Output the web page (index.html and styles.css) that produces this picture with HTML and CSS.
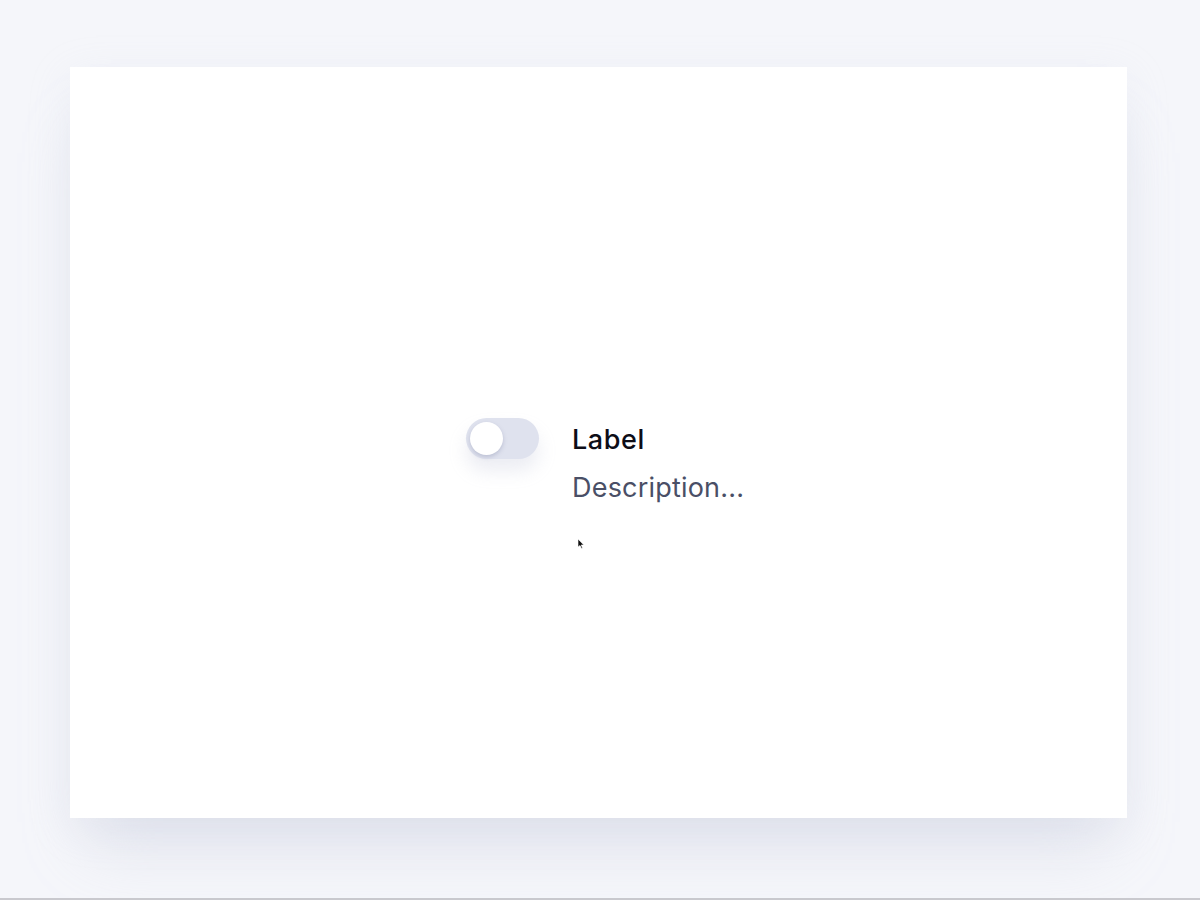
FILE: index.html
```html
<!DOCTYPE html>
<html>
<head>
<meta charset="utf-8">
<link rel="stylesheet" href="styles.css">
</head>
<body>
<div class="stage">
  <div class="card">
    <div class="field">
      <div class="toggle"><span class="knob"></span></div>
      <div class="text">
        <div class="label">Label</div>
        <div class="desc">Description...</div>
        <svg class="cursor" width="8" height="12" viewBox="0 0 8 12"><path d="M1 1 L1 9 L3 7.5 L4.5 10.5 L5.5 10 L4.2 7 L6.8 7 Z" fill="#111" stroke="#fff" stroke-width="0.6"/></svg>
      </div>
    </div>
  </div>
</div>
<div class="bottomline"></div>
</body>
</html>
```
FILE: styles.css
```css
html, body {
  margin: 0;
  padding: 0;
  background: #f5f6fa;
  font-family: Inter, "Noto Sans", sans-serif;
}
.stage {
  height: 898px;
  padding: 67px 0 0 70px;
  box-sizing: border-box;
}
.card {
  width: 1057px;
  height: 751px;
  background: #ffffff;
  box-shadow: 0 45px 60px -20px rgba(190, 195, 215, 0.4), 0 10px 40px rgba(205, 210, 225, 0.18);
  box-sizing: border-box;
  padding: 351px 0 0 396px;
}
.field {
  display: flex;
  gap: 33px;
  align-items: flex-start;
}
.toggle {
  width: 73px;
  height: 41px;
  border-radius: 21px;
  background: #dfe2ee;
  padding: 4px;
  box-sizing: border-box;
  box-shadow: 0 12px 18px rgba(170, 175, 200, 0.22);
  flex-shrink: 0;
}
.knob {
  display: block;
  width: 33px;
  height: 33px;
  border-radius: 50%;
  background: #ffffff;
  box-shadow: 0 2px 4px rgba(120, 125, 160, 0.35);
}
.text {
  display: flex;
  flex-direction: column;
  padding-top: 2px;
}
.label {
  font-size: 27px;
  font-weight: 500;
  letter-spacing: 0.6px;
  color: #0d0d17;
  line-height: 40px;
}
.desc {
  font-size: 27px;
  font-weight: 400;
  letter-spacing: 0.2px;
  color: #4a4f66;
  line-height: 40px;
  margin-top: 8px;
}
.cursor {
  display: block;
  margin-top: 30px;
  margin-left: 5px;
}
.bottomline {
  height: 2px;
  background: #c9c9ce;
}
```
